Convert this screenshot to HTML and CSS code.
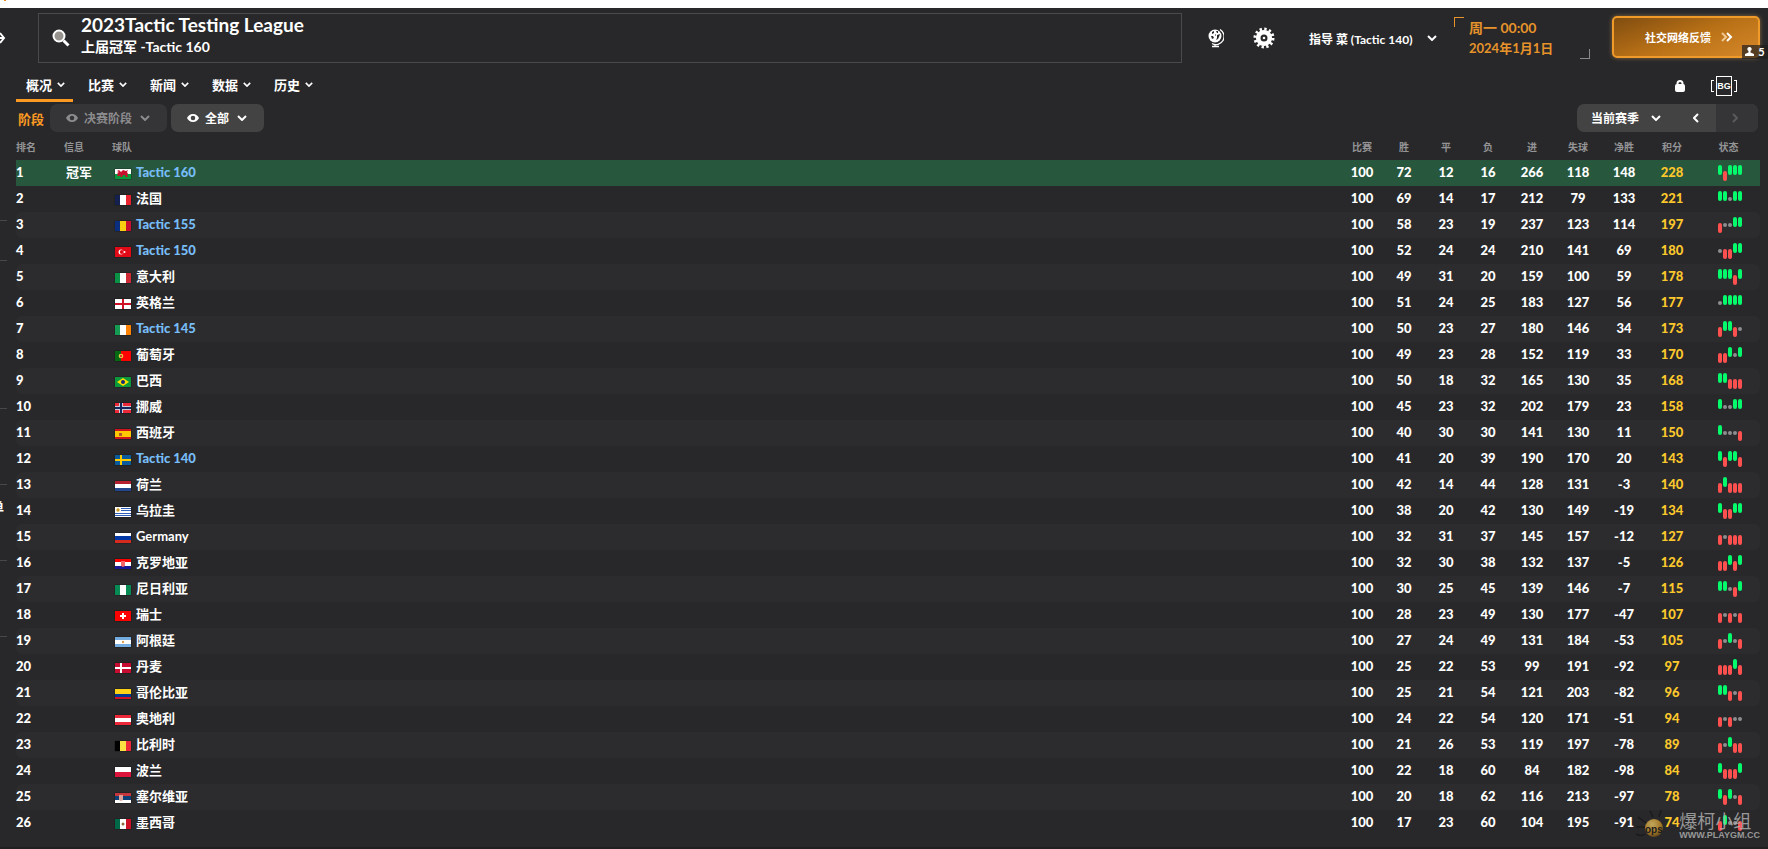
FILE: index.html
```html
<!DOCTYPE html>
<html lang="zh-CN">
<head>
  <meta charset="UTF-8" />
  <meta name="viewport" content="width=device-width, initial-scale=1.0" />
  <title>2023Tactic Testing League</title>
  <link rel="stylesheet" href="styles.css">
</head>
<body>
  <svg class="defs" aria-hidden="true">
    <symbol id="chevron" viewBox="0 0 10 6"><path d="M1 1l4 4 4-4" fill="none" stroke="currentColor" stroke-width="2"/></symbol>
    <symbol id="eye" viewBox="0 0 12 8"><path fill-rule="evenodd" d="M6 0C3 0 1 2 0 4c1 2 3 4 6 4s5-2 6-4C11 2 9 0 6 0zm0 1.700a2.300 2.300 0 1 1 0 4.600 2.300 2.300 0 0 1 0-4.600z" fill="currentColor"/></symbol>

    <symbol id="wal" viewBox="0 0 16 10"><path fill="#fff" d="M0 0h16v5H0z"/><path fill="#0a9a3c" d="M0 5h16v5H0z"/><path fill="#c8102e" d="M2 2l2-1 1 1 1 1 2-2 3 1 2-1-1 2 1 2-1 1 1 2h-2l-1-2-2 0-1 2H5l1-2-2 1-2 0 1-2-1-1 2-1z"/></symbol>
    <symbol id="fra" viewBox="0 0 16 10"><path fill="#14214f" d="M0 0h5v10H0z"/><path fill="#fff" d="M5 0h6v10H5z"/><path fill="#e8222e" d="M11 0h5v10h-5z"/></symbol>
    <symbol id="rou" viewBox="0 0 16 10"><path fill="#0a2f80" d="M0 0h5v10H0z"/><path fill="#f8cf10" d="M5 0h6v10H5z"/><path fill="#c8102e" d="M11 0h5v10h-5z"/></symbol>
    <symbol id="tur" viewBox="0 0 16 10"><path fill="#e30a17" d="M0 0h16v10H0z"/><circle cx="6" cy="5" r="2.500" fill="#fff"/><circle cx="6.800" cy="5" r="2" fill="#e30a17"/><circle cx="9.500" cy="5" r="1" fill="#fff"/></symbol>
    <symbol id="ita" viewBox="0 0 16 10"><path fill="#0a9246" d="M0 0h5v10H0z"/><path fill="#fff" d="M5 0h6v10H5z"/><path fill="#ce2b37" d="M11 0h5v10h-5z"/></symbol>
    <symbol id="eng" viewBox="0 0 16 10"><path fill="#fff" d="M0 0h16v10H0z"/><path fill="#ce1124" d="M7 0h2v10H7zM0 4h16v2H0z"/></symbol>
    <symbol id="irl" viewBox="0 0 16 10"><path fill="#169b52" d="M0 0h5v10H0z"/><path fill="#fff" d="M5 0h6v10H5z"/><path fill="#ff8200" d="M11 0h5v10h-5z"/></symbol>
    <symbol id="por" viewBox="0 0 16 10"><path fill="#066a12" d="M0 0h6v10H0z"/><path fill="#f00" d="M6 0h10v10H6z"/><circle cx="6" cy="5" r="2.300" fill="#e8d048"/><circle cx="6" cy="5" r="1.200" fill="#d33"/></symbol>
    <symbol id="bra" viewBox="0 0 16 10"><path fill="#0a9a3c" d="M0 0h16v10H0z"/><path fill="#fedf00" d="M8 1l6 4-6 4-6-4z"/><circle cx="8" cy="5" r="2" fill="#122a78"/></symbol>
    <symbol id="nor" viewBox="0 0 16 10"><path fill="#ed2939" d="M0 0h16v10H0z"/><path fill="#c8ccd8" d="M4 0h4v10H4zM0 3h16v4H0z"/><path fill="#12275c" d="M5 0h2v10H5zM0 4h16v2H0z"/></symbol>
    <symbol id="esp" viewBox="0 0 16 10"><path fill="#d0141e" d="M0 0h16v10H0z"/><path fill="#ffc800" d="M0 2h16v6H0z"/><path fill="#b4582c" d="M4 4h3v3H4z"/></symbol>
    <symbol id="swe" viewBox="0 0 16 10"><path fill="#0a5a9e" d="M0 0h16v10H0z"/><path fill="#fecc00" d="M5 0h2v10H5zM0 4h16v2H0z"/></symbol>
    <symbol id="ned" viewBox="0 0 16 10"><path fill="#b4202e" d="M0 0h16v3H0z"/><path fill="#fff" d="M0 3h16v4H0z"/><path fill="#21468b" d="M0 7h16v3H0z"/></symbol>
    <symbol id="uru" viewBox="0 0 16 10"><path fill="#fff" d="M0 0h16v10H0z"/><path fill="#2d5fb8" d="M6 1h10v1H6zM6 3h10v1H6zM0 6h16v1H0zM0 8h16v1H0z"/><circle cx="3" cy="3" r="1.700" fill="#c99a22"/></symbol>
    <symbol id="rus" viewBox="0 0 16 10"><path fill="#fff" d="M0 0h16v3H0z"/><path fill="#0039a6" d="M0 3h16v4H0z"/><path fill="#d52b1e" d="M0 7h16v3H0z"/></symbol>
    <symbol id="cro" viewBox="0 0 16 10"><path fill="#f00" d="M0 0h16v3H0z"/><path fill="#fff" d="M0 3h16v4H0z"/><path fill="#171796" d="M0 7h16v3H0z"/><path fill="#f4686c" d="M6 2h4v5L8 8 6 7z"/></symbol>
    <symbol id="nga" viewBox="0 0 16 10"><path fill="#078a54" d="M0 0h16v10H0z"/><path fill="#fff" d="M5 0h6v10H5z"/></symbol>
    <symbol id="sui" viewBox="0 0 16 10"><path fill="#f00" d="M0 0h16v10H0z"/><path fill="#fff" d="M7 2h2v6H7zM5 4h6v2H5z"/></symbol>
    <symbol id="arg" viewBox="0 0 16 10"><path fill="#74acdf" d="M0 0h16v10H0z"/><path fill="#fff" d="M0 3h16v4H0z"/><circle cx="8" cy="5" r="1.200" fill="#e0a050"/></symbol>
    <symbol id="den" viewBox="0 0 16 10"><path fill="#c60c30" d="M0 0h16v10H0z"/><path fill="#fff" d="M5 0h2v10H5zM0 4h16v2H0z"/></symbol>
    <symbol id="col" viewBox="0 0 16 10"><path fill="#fcd116" d="M0 0h16v5H0z"/><path fill="#003893" d="M0 5h16v3H0z"/><path fill="#ce1126" d="M0 8h16v2H0z"/></symbol>
    <symbol id="aut" viewBox="0 0 16 10"><path fill="#ed2939" d="M0 0h16v10H0z"/><path fill="#fff" d="M0 3h16v4H0z"/></symbol>
    <symbol id="bel" viewBox="0 0 16 10"><path fill="#000" d="M0 0h5v10H0z"/><path fill="#fae042" d="M5 0h6v10H5z"/><path fill="#ed2939" d="M11 0h5v10h-5z"/></symbol>
    <symbol id="pol" viewBox="0 0 16 10"><path fill="#fff" d="M0 0h16v5H0z"/><path fill="#dc143c" d="M0 5h16v5H0z"/></symbol>
    <symbol id="srb" viewBox="0 0 16 10"><path fill="#c6363c" d="M0 0h16v3H0z"/><path fill="#0c4076" d="M0 3h16v4H0z"/><path fill="#fff" d="M0 7h16v3H0z"/><path fill="#dca096" d="M4 2h4v5L6 8 4 7z"/></symbol>
    <symbol id="mex" viewBox="0 0 16 10"><path fill="#006847" d="M0 0h5v10H0z"/><path fill="#fff" d="M5 0h6v10H5z"/><path fill="#ce1126" d="M11 0h5v10h-5z"/><circle cx="8" cy="5" r="1.500" fill="#8c6a42"/></symbol>
  </svg>

  <div class="window-strip"><i></i></div>

  <div class="app">
    <aside class="sidebar">
      <button class="forward" aria-label="前进">
        <svg width="6" height="14" viewBox="0 0 6 14"><path d="M0 2l4 5-4 5M0 7h4" fill="none" stroke="#fff" stroke-width="2"/></svg>
      </button>
      <div class="side-gap"></div>
      <div class="side-item short"></div>
      <div class="side-item tall"></div>
      <div class="side-item"></div>
      <div class="side-item"><span>单</span></div>
      <div class="side-item"></div>
      <div class="side-item"></div>
    </aside>

    <main>
      <header class="topbar">
        <div class="title-box">
          <button class="search" aria-label="搜索">
            <svg width="18" height="18" viewBox="0 0 18 18"><circle cx="7" cy="7" r="5.500" fill="#96928e" stroke="#fff" stroke-width="2"/><path d="M11.500 11.500l5 5" stroke="#fff" stroke-width="3"/></svg>
          </button>
          <div>
            <h1>2023Tactic Testing League</h1>
            <p>上届冠军 -Tactic 160</p>
          </div>
        </div>

        <button class="icon-btn" aria-label="世界">
          <svg width="16" height="20" viewBox="0 0 16 20"><circle cx="7" cy="8" r="6.500" fill="#fff"/><path d="M12 1.500a8 8 0 0 1-8 14" fill="none" stroke="#fff" stroke-width="1.300"/><path d="M4 4l2-1 0 2-2 1zM8 3l2 0 0 2-1 0zM3 8l2 0 1 2-2 1zM7 6l1 1-1 1zM9 7l3-1-1 3-1 2-2 1 1-2z" fill="#28282a"/><path d="M7 16v2.500M4 18.500h7" stroke="#fff" stroke-width="1.300"/></svg>
        </button>
        <button class="icon-btn gear" aria-label="设置">
          <svg width="22" height="22" viewBox="0 0 22 22"><path d="M11 3v16M3 11h16" stroke="none"/><circle cx="11" cy="11" r="9" fill="none" stroke="#fff" stroke-width="3" stroke-dasharray="2.350 2.362"/><circle cx="11" cy="11" r="5.800" fill="none" stroke="#fff" stroke-width="4.600"/><circle cx="11" cy="11" r="1.300" fill="#fff"/></svg>
        </button>
        <button class="manager">指导 菜 (Tactic 140) <svg width="10" height="6"><use href="#chevron"/></svg></button>

        <div class="date">
          <div class="clock">周一 00:00</div>
          <div>2024年1月1日</div>
        </div>

        <div class="continue-wrap">
          <button class="continue">社交网络反馈
            <svg width="12" height="10" viewBox="0 0 12 10"><path d="M1 1l4 4-4 4" fill="none" stroke="#f0c890" stroke-width="2"/><path d="M6 1l4 4-4 4" fill="none" stroke="#fff" stroke-width="2"/></svg>
          </button>
          <span class="online"><svg width="9" height="9" viewBox="0 0 9 9"><path d="M4.500 0a2 2 0 0 1 1 3.800V5.500L9 7v2H0V7l3.500-1.500V3.800a2 2 0 0 1 1-3.800z" fill="#fff"/></svg>5</span>
        </div>
      </header>

      <nav class="tabs">
        <button class="active">概况 <svg width="8" height="5"><use href="#chevron"/></svg></button>
        <button>比赛 <svg width="8" height="5"><use href="#chevron"/></svg></button>
        <button>新闻 <svg width="8" height="5"><use href="#chevron"/></svg></button>
        <button>数据 <svg width="8" height="5"><use href="#chevron"/></svg></button>
        <button>历史 <svg width="8" height="5"><use href="#chevron"/></svg></button>
        <div class="tab-icons">
          <svg width="10" height="12" viewBox="0 0 10 12"><rect y="4" width="10" height="8" rx="2" fill="#fff"/><path d="M2.500 6V3.500a2.500 2.500 0 0 1 5 0V6" fill="none" stroke="#fff" stroke-width="2"/></svg>
          <span class="bg-mark"><b>BG</b></span>
        </div>
      </nav>

      <div class="filters">
        <span class="stage">阶段</span>
        <label class="pill dim">
          <svg width="12" height="8"><use href="#eye"/></svg>
          <select aria-label="阶段" disabled><option>决赛阶段</option></select>
          <svg width="10" height="6"><use href="#chevron"/></svg>
        </label>
        <label class="pill">
          <svg width="12" height="8"><use href="#eye"/></svg>
          <select aria-label="显示"><option>全部</option></select>
          <svg width="10" height="6"><use href="#chevron"/></svg>
        </label>
        <div class="season">
          <label>
            <select aria-label="赛季"><option>当前赛季</option></select>
            <svg width="10" height="6"><use href="#chevron"/></svg>
          </label>
          <button class="prev" aria-label="上一赛季"><svg width="6" height="10" viewBox="0 0 6 10"><path d="M5 1L1 5l4 4" fill="none" stroke="currentColor" stroke-width="2"/></svg></button>
          <button class="next" aria-label="下一赛季" disabled><svg width="6" height="10" viewBox="0 0 6 10"><path d="M1 1l4 4-4 4" fill="none" stroke="currentColor" stroke-width="2"/></svg></button>
        </div>
      </div>

      <table class="standings">
        <thead>
          <tr>
            <th class="rank">排名</th>
            <th class="info">信息</th>
            <th class="team">球队</th>
            <th class="num">比赛</th>
            <th class="num">胜</th>
            <th class="num">平</th>
            <th class="num">负</th>
            <th class="goals">进</th>
            <th class="goals">失球</th>
            <th class="goals">净胜</th>
            <th class="points">积分</th>
            <th class="form">状态</th>
          </tr>
        </thead>
        <tbody id="rows"></tbody>
      </table>
    </main>
  </div>

  <div class="watermark">
    <svg width="44" height="32" viewBox="0 0 44 32">
      <defs><radialGradient id="bulb" cx="0.400" cy="0.300" r="0.800"><stop offset="0" stop-color="#e8c868"/><stop offset="0.600" stop-color="#c08a28"/><stop offset="1" stop-color="#4c3610"/></radialGradient></defs>
      <path d="M3 8l8 6M15 2l3 6M26 1l-2 7M1 18l9 0M1 25q5 3 9 0" stroke="#18181a" stroke-width="1.500" fill="none"/>
      <circle cx="19" cy="19" r="9" fill="url(#bulb)"/>
      <text x="10" y="24" class="ops">ops</text>
    </svg>
    <div>
      <div class="wm-name">爆柯小组</div>
      <div class="wm-url">WWW.PLAYGM.CC</div>
    </div>
  </div>

  <script src="script.js"></script>
</body>
</html>
```
FILE: styles.css
```css
* {
  box-sizing: border-box;
}
body {
  margin: 0;
  min-height: 100vh;
  position: relative;
  display: flex;
  flex-direction: column;
  overflow: hidden;
  background: #28282a;
  color: #fff;
  font-family: Lato, "Noto Sans CJK SC", sans-serif;
  font-size: 13px;
  font-weight: 700;
}
button, select {
  font: inherit;
  color: inherit;
  background: none;
  border: none;
  padding: 0;
  margin: 0;
  appearance: none;
}
button {
  cursor: pointer;
}
select:disabled {
  opacity: 1;
}
svg {
  display: block;
  flex: none;
}
.defs {
  position: absolute;
  width: 0;
  height: 0;
}
.window-strip {
  height: 8px;
  background: #fff;
  padding-left: 4px;
}
.window-strip i {
  display: block;
  width: 2px;
  height: 1px;
  background: #e08a1e;
}
.app {
  display: flex;
  flex: 1;
  border-bottom: 2px solid #221f21;
}

/* sidebar */
.sidebar {
  width: 16px;
  flex: none;
  display: flex;
  flex-direction: column;
}
.forward {
  height: 60px;
  display: flex;
  align-items: center;
}
.side-gap {
  height: 152px;
}
.side-item {
  width: 7px;
  height: 76px;
  border-top: 1px solid #48484a;
  overflow: hidden;
  display: flex;
  justify-content: flex-end;
  padding: 12px 3px 0 0;
}
.side-item.short {
  height: 40px;
}
.side-item.tall {
  height: 148px;
}

/* top bar */
main {
  flex: 1;
  min-width: 0;
  padding-right: 8px;
}
.topbar {
  height: 60px;
  display: flex;
  align-items: center;
}
.title-box {
  flex: 1;
  height: 50px;
  margin: 0 26px 0 22px;
  padding-left: 13px;
  border: 1px solid #4a4a4c;
  display: flex;
  align-items: center;
  gap: 11px;
}
.title-box h1 {
  margin: 0;
  font-size: 19px;
  line-height: 22px;
}
.title-box p {
  margin: 0 0 4px;
  font-size: 14px;
  line-height: 22px;
}
.gear {
  margin-left: 29px;
}
.manager {
  display: flex;
  align-items: center;
  justify-content: space-between;
  width: 128px;
  margin-left: 34px;
  font-size: 12px;
  white-space: nowrap;
}
.date {
  position: relative;
  width: 136px;
  height: 42px;
  margin-left: 17px;
  padding-left: 15px;
  color: #e6932a;
  font-size: 13px;
  line-height: 21px;
}
.date .clock {
  font-size: 14px;
}
.date::before, .date::after {
  content: "";
  position: absolute;
  width: 9px;
  height: 9px;
}
.date::before {
  left: 0;
  top: 0;
  border-top: 1px solid #e6932a;
  border-left: 1px solid #e6932a;
}
.date::after {
  right: 0;
  bottom: 0;
  border-right: 1px solid #8a8a8c;
  border-bottom: 1px solid #8a8a8c;
}
.continue-wrap {
  position: relative;
  margin: 0 0 3px 22px;
}
.continue {
  width: 148px;
  height: 42px;
  display: flex;
  align-items: center;
  justify-content: center;
  gap: 10px;
  padding-left: 6px;
  border: 2px solid #f09a2a;
  border-radius: 5px;
  background: linear-gradient(160deg, #804d10, #b87016 50%, #d6882a);
  box-shadow: 0 0 4px #8a6a40;
  font-size: 11px;
}
.online {
  position: absolute;
  right: -8px;
  bottom: -1px;
  width: 26px;
  height: 14px;
  display: flex;
  align-items: center;
  justify-content: center;
  gap: 4px;
  background: rgba(30, 30, 32, 0.700);
  font-size: 11px;
}

/* tabs */
.tabs {
  height: 36px;
  display: flex;
  align-items: flex-start;
  gap: 5px;
}
.tabs button {
  height: 34px;
  width: 57px;
  padding: 2px 0 0 2px;
  display: flex;
  align-items: center;
  justify-content: center;
  gap: 5px;
  border-bottom: 3px solid transparent;
}
.tabs .active {
  border-bottom-color: #fb9a22;
}
.tab-icons {
  margin: 8px 23px 0 auto;
  display: flex;
  align-items: center;
  gap: 26px;
}
.bg-mark {
  position: relative;
  width: 26px;
  height: 20px;
  display: flex;
  justify-content: center;
}
.bg-mark::before {
  content: "";
  position: absolute;
  inset: 4px 0;
  border: 1px solid #fff;
}
.bg-mark b {
  position: relative;
  width: 16px;
  border: 1px solid #fff;
  outline: 2px solid #28282a;
  background: #28282a;
  font: bold 9px/18px "Liberation Sans", sans-serif;
  text-align: center;
}

/* filters */
.filters {
  display: flex;
  align-items: center;
  height: 28px;
  font-size: 12px;
}
.stage {
  width: 34px;
  padding-left: 2px;
  color: #fb9a22;
  font-size: 13px;
}
.pill {
  display: flex;
  align-items: center;
  height: 28px;
  padding: 0 17px 0 16px;
  margin-right: 4px;
  border-radius: 7px;
  background: #434344;
}
.pill select {
  margin: 0 7px 0 6px;
}
.pill.dim {
  background: #353537;
  color: #8c8c8e;
}
.season {
  display: flex;
  height: 28px;
  width: 181px;
  margin-left: auto;
  margin-right: 2px;
  border-radius: 7px;
  overflow: hidden;
  background: #434344;
}
.season label {
  display: flex;
  align-items: center;
  gap: 11px;
  padding-left: 14px;
  width: 98px;
}
.season button {
  display: flex;
  align-items: center;
  justify-content: center;
}
.season .prev {
  width: 41px;
}
.season .next {
  flex: 1;
  padding-right: 4px;
  background: #353537;
  color: #5a5a5c;
}

/* standings */
.standings {
  width: 100%;
  table-layout: fixed;
  border-collapse: separate;
  border-spacing: 0;
  line-height: 24px;
}
.standings th {
  height: 28px;
  padding: 2px 0 0;
  color: #949496;
  font-size: 10px;
  font-weight: 700;
}
.standings td {
  height: 26px;
  padding: 0 0 2px;
  text-align: center;
  font-weight: 900;
}
.standings .rank, .standings .team, .standings th.info {
  text-align: left;
}
.rank, .info {
  width: 48px;
}
.standings td.info {
  padding-left: 2px;
  text-align: left;
  white-space: nowrap;
  font-weight: 700;
}
.num {
  width: 42px;
}
.goals {
  width: 46px;
}
.points {
  width: 50px;
}
.form {
  width: 63px;
}
.standings tbody .points {
  color: #fcc82c;
}
.standings tbody tr:nth-child(odd) td {
  background: #2c2c2e;
}
.standings tbody tr:nth-child(odd) td:first-child {
  border-radius: 6px 0 0 6px;
}
.standings tbody tr:nth-child(odd) td:last-child {
  border-radius: 0 6px 6px 0;
}
.standings tbody tr.champion:nth-child(odd) td {
  background: #27573d;
  border-radius: 0;
}
.club {
  display: flex;
  align-items: center;
  gap: 5px;
  padding-left: 3px;
  color: #fff;
  text-decoration: none;
  font-weight: 700;
}
.club svg {
  margin-top: 3px;
  box-shadow: 0 0 1px #000;
}
.club.tactic {
  color: #77bdf8;
  font-weight: 900;
}
.results {
  display: flex;
  justify-content: center;
  align-items: flex-start;
  gap: 1px;
  height: 14px;
  padding-left: 2px;
}
.results i {
  width: 4px;
  height: 10px;
  border-radius: 2px;
}
.results .w {
  background: #04fc6c;
}
.results .l {
  background: #ff5050;
  margin-top: 6px;
}
.results .d {
  height: 4px;
  background: #8e8e90;
  margin-top: 6px;
}

/* watermark */
.watermark {
  position: absolute;
  right: 8px;
  bottom: 8px;
  display: flex;
  align-items: flex-end;
  pointer-events: none;
  color: #b4b4b4;
  opacity: 0.800;
}
.ops {
  font: bold 10px "Liberation Sans", sans-serif;
  fill: #18181a;
}
.wm-name {
  font: 18px/20px "Noto Sans CJK SC", sans-serif;
}
.wm-url {
  font: bold 9px/11px "Liberation Sans", sans-serif;
}
```
FILE: script.js
```js
// flag, team, won, drawn, lost, goals for, goals against, difference, points, last five
const teams = [
  ['wal', 'Tactic 160', 72, 12, 16, 266, 118, 148, 228, 'wlwww'],
  ['fra', '法国', 69, 14, 17, 212, 79, 133, 221, 'wwdww'],
  ['rou', 'Tactic 155', 58, 23, 19, 237, 123, 114, 197, 'lddww'],
  ['tur', 'Tactic 150', 52, 24, 24, 210, 141, 69, 180, 'dllww'],
  ['ita', '意大利', 49, 31, 20, 159, 100, 59, 178, 'wwwlw'],
  ['eng', '英格兰', 51, 24, 25, 183, 127, 56, 177, 'dwwww'],
  ['irl', 'Tactic 145', 50, 23, 27, 180, 146, 34, 173, 'lwwld'],
  ['por', '葡萄牙', 49, 23, 28, 152, 119, 33, 170, 'llwdw'],
  ['bra', '巴西', 50, 18, 32, 165, 130, 35, 168, 'wwlll'],
  ['nor', '挪威', 45, 23, 32, 202, 179, 23, 158, 'wddww'],
  ['esp', '西班牙', 40, 30, 30, 141, 130, 11, 150, 'wdddl'],
  ['swe', 'Tactic 140', 41, 20, 39, 190, 170, 20, 143, 'wlwwl'],
  ['ned', '荷兰', 42, 14, 44, 128, 131, -3, 140, 'lwlll'],
  ['uru', '乌拉圭', 38, 20, 42, 130, 149, -19, 134, 'wllww'],
  ['rus', 'Germany', 32, 31, 37, 145, 157, -12, 127, 'ldlll'],
  ['cro', '克罗地亚', 32, 30, 38, 132, 137, -5, 126, 'llwlw'],
  ['nga', '尼日利亚', 30, 25, 45, 139, 146, -7, 115, 'wwdlw'],
  ['sui', '瑞士', 28, 23, 49, 130, 177, -47, 107, 'ldldl'],
  ['arg', '阿根廷', 27, 24, 49, 131, 184, -53, 105, 'ldwdl'],
  ['den', '丹麦', 25, 22, 53, 99, 191, -92, 97, 'lllwl'],
  ['col', '哥伦比亚', 25, 21, 54, 121, 203, -82, 96, 'wwldl'],
  ['aut', '奥地利', 24, 22, 54, 120, 171, -51, 94, 'ldldd'],
  ['bel', '比利时', 21, 26, 53, 119, 197, -78, 89, 'ldwll'],
  ['pol', '波兰', 22, 18, 60, 84, 182, -98, 84, 'wlllw'],
  ['srb', '塞尔维亚', 20, 18, 62, 116, 213, -97, 78, 'wlwdl'],
  ['mex', '墨西哥', 17, 23, 60, 104, 195, -91, 74, 'lwddl']
];

function renderRows() {
  document.getElementById('rows').innerHTML = teams.map((team, i) => {
    const [flag, name, won, drawn, lost, scored, conceded, diff, points, form] = team;
    const cells = [100, won, drawn, lost, scored, conceded, diff].map(n => `<td>${n}</td>`).join('');
    const results = form.split('').map(r => `<i class="${r}"></i>`).join('');
    return `
      <tr class="${i === 0 ? 'champion' : ''}">
        <td class="rank">${i + 1}</td>
        <td class="info">${i === 0 ? '冠军' : ''}</td>
        <td class="team"><a href="#" class="club ${name.startsWith('Tactic') ? 'tactic' : ''}"><svg width="16" height="10"><use href="#${flag}"/></svg>${name}</a></td>
        ${cells}
        <td class="points">${points}</td>
        <td class="form"><div class="results">${results}</div></td>
      </tr>`;
  }).join('');
}

renderRows();
```
